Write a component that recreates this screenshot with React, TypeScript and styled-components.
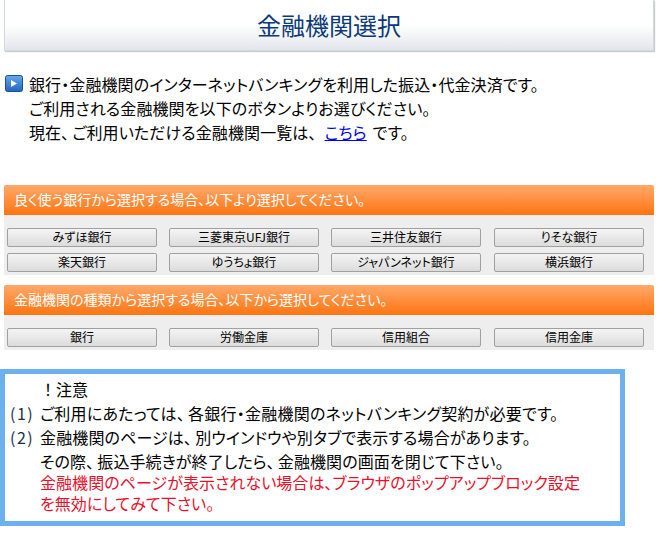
import styled, { createGlobalStyle } from "styled-components";

const GlobalStyle = createGlobalStyle`
  html, body {
    margin: 0;
    padding: 0;
    background: #fff;
    font-family: "Noto Sans CJK JP", "Liberation Sans", sans-serif;
    font-feature-settings: "palt";
    color: #000;
  }
`;

const Page = styled.div`
  width: 668px;
  height: 533px;
  overflow: hidden;
`;

const Header = styled.h1`
  box-sizing: border-box;
  margin: 0 14px 0 4px;
  height: 51px;
  padding-top: 7px;
  text-align: center;
  font-size: 24px;
  line-height: 36px;
  font-weight: 400;
  color: #0a3a78;
  background: linear-gradient(#fff 0, #fff 50%, #e2e6eb 100%);
  border: 1px solid #d0d8e2;
  border-top: none;
  box-shadow: 1px 1px 1px #ccc;
`;

const Intro = styled.div`
  display: flex;
  gap: 6px;
  margin: 21px 0 1px 5px;
  height: 112px;
`;

const IntroIcon = styled.svg`
  flex: none;
  margin-top: 3px;
`;

const IntroText = styled.div`
  font-size: 16px;
  line-height: 24px;
  letter-spacing: 0.1px;
`;

const Comma = styled.span`
  margin-right: 3px;
`;

const PlainLink = styled.a`
  color: #0000ee;
  text-decoration: underline;
  margin: 0 6px 0 5px;
`;

const Section = styled.section`
  margin: 0 14px 10px 4px;
`;

const SectionBar = styled.div`
  box-sizing: border-box;
  height: 30px;
  padding-left: 10px;
  font-size: 14px;
  line-height: 29px;
  color: #fff;
  background: linear-gradient(#ffa96b, #ff7410);
  border-radius: 2px 2px 0 0;
`;

const ButtonGrid = styled.div`
  display: grid;
  grid-template-columns: 162px 162px 163px 150px;
  row-gap: 6px;
  padding: 13px 0 3px 3px;
  background: #eee;
`;

const BankButton = styled.button`
  box-sizing: border-box;
  width: 150px;
  height: 19px;
  padding: 0 0 2px;
  font-family: inherit;
  font-feature-settings: inherit;
  font-size: 12px;
  line-height: 15px;
  color: #000;
  background: linear-gradient(#f4f4f4, #dcdcdc);
  border: 1px solid #a0a0a0;
  border-radius: 2px;
`;

const Notice = styled.div`
  box-sizing: border-box;
  width: 625px;
  height: 157px;
  margin-top: 19px;
  padding: 3px 0 0 5px;
  border: 5px solid #6db0ee;
  font-size: 16px;
`;

const NoticeTitle = styled.div`
  line-height: 24px;
  padding-left: 30px;
  font-feature-settings: normal;
`;

const NoticeRow = styled.div`
  display: flex;
  line-height: 24px;
`;

const NoticeNumber = styled.span`
  flex: none;
  width: 30px;
  letter-spacing: 1.5px;
  color: #1c2f4a;
`;

const NoticeLine = styled.span<{ $spacing: number }>`
  letter-spacing: ${(p) => p.$spacing}px;
`;

const NoticeWarning = styled.div`
  margin-left: 30px;
  margin-top: -1px;
  line-height: 21px;
  letter-spacing: 0.05px;
  color: #e8102c;
`;

const frequentBanks = [
  "みずほ銀行",
  "三菱東京UFJ銀行",
  "三井住友銀行",
  "りそな銀行",
  "楽天銀行",
  "ゆうちょ銀行",
  "ジャパンネット銀行",
  "横浜銀行",
];

const bankTypes = ["銀行", "労働金庫", "信用組合", "信用金庫"];

function ArrowIcon() {
  return (
    <IntroIcon width="18" height="18" viewBox="0 0 18 18">
      <defs>
        <linearGradient id="arrowBg" x1="0" y1="0" x2="0" y2="1">
          <stop offset="0" stopColor="#6aa8e8" />
          <stop offset="1" stopColor="#1f66c0" />
        </linearGradient>
      </defs>
      <rect x="0.5" y="0.5" width="17" height="16" rx="2" fill="url(#arrowBg)" stroke="#1d4f96" />
      <path d="M6 5l6 3.5L6 12z" fill="#fff" />
    </IntroIcon>
  );
}

export default function App() {
  return (
    <Page>
      <GlobalStyle />
      <Header>金融機関選択</Header>
      <Intro>
        <ArrowIcon />
        <IntroText>
          銀行・金融機関のインターネットバンキングを利用した振込・代金決済です。
          <br />
          ご利用される金融機関を以下のボタンよりお選びください。
          <br />
          現在<Comma>、</Comma>ご利用いただける金融機関一覧は<Comma>、</Comma>
          <PlainLink href="#">こちら</PlainLink>
          です。
        </IntroText>
      </Intro>
      <Section>
        <SectionBar>良く使う銀行から選択する場合、以下より選択してください。</SectionBar>
        <ButtonGrid>
          {frequentBanks.map((name) => (
            <BankButton key={name}>{name}</BankButton>
          ))}
        </ButtonGrid>
      </Section>
      <Section>
        <SectionBar>金融機関の種類から選択する場合、以下から選択してください。</SectionBar>
        <ButtonGrid>
          {bankTypes.map((name) => (
            <BankButton key={name}>{name}</BankButton>
          ))}
        </ButtonGrid>
      </Section>
      <Notice>
        <NoticeTitle>！注意</NoticeTitle>
        <NoticeRow>
          <NoticeNumber>(1)</NoticeNumber>
          <NoticeLine $spacing={0.24}>
            ご利用にあたっては<Comma>、</Comma>各銀行・金融機関のネットバンキング契約が必要です。
          </NoticeLine>
        </NoticeRow>
        <NoticeRow>
          <NoticeNumber>(2)</NoticeNumber>
          <NoticeLine $spacing={0.13}>
            金融機関のページは<Comma>、</Comma>別ウインドウや別タブで表示する場合があります。
          </NoticeLine>
        </NoticeRow>
        <NoticeRow>
          <NoticeNumber />
          <NoticeLine $spacing={0.1}>
            その際<Comma>、</Comma>振込手続きが終了したら<Comma>、</Comma>金融機関の画面を閉じて下さい。
          </NoticeLine>
        </NoticeRow>
        <NoticeWarning>
          金融機関のページが表示されない場合は、ブラウザのポップアップブロック設定
          <br />
          を無効にしてみて下さい。
        </NoticeWarning>
      </Notice>
    </Page>
  );
}
